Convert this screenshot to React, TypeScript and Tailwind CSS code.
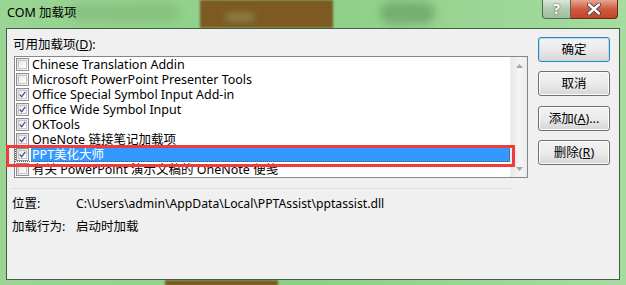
import React from 'react';

const FONT = '"Noto Sans", "Noto Sans CJK SC", sans-serif';

type Item = { label: string; checked: boolean; selected?: boolean };

const ITEMS: Item[] = [
  { label: 'Chinese Translation Addin', checked: false },
  { label: 'Microsoft PowerPoint Presenter Tools', checked: false },
  { label: 'Office Special Symbol Input Add-in', checked: true },
  { label: 'Office Wide Symbol Input', checked: true },
  { label: 'OKTools', checked: true },
  { label: 'OneNote 链接笔记加载项', checked: true },
  { label: 'PPT美化大师', checked: true, selected: true },
  { label: '有关 PowerPoint 演示文稿的 OneNote 便笺', checked: false },
];

const CheckBox: React.FC<{ checked: boolean }> = ({ checked }) => (
  <div className="w-[13px] h-[13px] shrink-0 border border-[#8f8f8f] bg-gradient-to-br from-[#dcdcdc] to-[#fbfbfb] p-[1px]">
    <div className="w-full h-full border border-[#c6c6c6] bg-gradient-to-br from-[#e9e9e9] to-white flex items-center justify-center">
      {checked && (
        <svg width="9" height="9" viewBox="0 0 9 9">
          <path d="M1 4.5 L3.5 7.5 L8 1" fill="none" stroke="#3b4f8a" strokeWidth="1.6" />
        </svg>
      )}
    </div>
  </div>
);

const Btn: React.FC<{ children: React.ReactNode; primary?: boolean }> = ({ children, primary }) => (
  <div
    className={
      'w-[72px] h-[25px] rounded-[3px] border flex items-center justify-center text-[12.5px] leading-[16px] text-black bg-gradient-to-b from-[#f2f2f2] via-[#ebebeb] to-[#d6d6d6] ' +
      (primary ? 'border-[#3c7fb1] shadow-[inset_0_0_0_1px_#a8e3fa]' : 'border-[#707070] shadow-[inset_0_0_0_1px_#fcfcfc]')
    }
  >
    {children}
  </div>
);

const ScrollArrow: React.FC<{ up?: boolean }> = ({ up }) => (
  <div className="h-[17px] flex items-center justify-center">
    <svg width="7" height="4" viewBox="0 0 7 4">
      <path d={up ? 'M0 4 L3.5 0 L7 4 Z' : 'M0 0 L3.5 4 L7 0 Z'} fill="#a6a6a6" />
    </svg>
  </div>
);

export default function App() {
  return (
    <div
      className="relative w-[626px] h-[285px] overflow-hidden bg-gradient-to-r from-[#9ad593] via-[#8ccf86] to-[#a6dc9f]"
      style={{ fontFamily: FONT }}
    >
      {/* blurred desktop behind the glass */}
      <div className="absolute left-[200px] top-0 w-[133px] h-[28px] bg-[#7c5a22] blur-[1px]" />
      <div className="absolute left-[165px] top-[280px] w-[113px] h-[6px] bg-[#7c5a22] blur-[1px]" />
      <div className="absolute left-[225px] top-[12px] w-[30px] h-[10px] rounded-full bg-[#a0b070]/40 blur-[3px]" />
      <div className="absolute left-[380px] top-[2px] w-[55px] h-[22px] rounded-full bg-[#6a9e64]/70 blur-[4px]" />
      <div className="absolute left-[70px] top-[4px] w-[110px] h-[18px] rounded-full bg-[#7fb877]/60 blur-[5px]" />

      <div className="relative flex flex-col h-full">
        {/* title bar */}
        <div className="h-[28px] flex items-start justify-between pl-[7px] pr-[8px]">
          <div className="h-[27px] flex items-center text-[12.5px] text-black">COM 加载项</div>
          <div className="flex">
            <div className="w-[29px] h-[19px] rounded-bl-[4px] border border-[#4e6b55] border-t-0 bg-gradient-to-b from-[#dbe7d9] via-[#b4cbb0] to-[#9fc09a] flex items-center justify-center text-white text-[14px] font-bold leading-none [text-shadow:0_0_2px_#333]">
              ?
            </div>
            <div className="w-[47px] h-[19px] rounded-br-[4px] border border-l-0 border-t-0 border-[#5b3023] bg-gradient-to-b from-[#e8a493] via-[#cf5a3d] to-[#c2452a] flex items-center justify-center">
              <svg width="16" height="12" viewBox="0 0 16 12">
                <path d="M3 1.5 L13 10.5 M13 1.5 L3 10.5" stroke="#3a3a3a" strokeWidth="4" strokeLinecap="round" />
                <path d="M3 1.5 L13 10.5 M13 1.5 L3 10.5" stroke="white" strokeWidth="2.4" strokeLinecap="round" />
              </svg>
            </div>
          </div>
        </div>

        {/* client area */}
        <div className="mx-[6px] h-[252px] border border-[#3f5f44] bg-[#f0f0f0] flex flex-col text-[12.5px] leading-[15px] text-black">
          <div className="flex">
            <div className="flex flex-col pl-[6px] pt-[8px]">
              <div className="h-[16px] leading-[16px]">
                可用加载项(<span className="underline">D</span>):
              </div>
              <div className="mt-[3px] ml-[1px] w-[514px] h-[122px] border border-[#828790] bg-white flex">
                <div className="flex-1 flex flex-col overflow-hidden">
                  {ITEMS.map((it) => (
                    <div
                      key={it.label}
                      className={
                        'h-[15px] shrink-0 flex items-center pl-[1px] ' +
                        (it.selected ? 'outline outline-1 outline-dotted outline-[#555] -outline-offset-1' : '')
                      }
                    >
                      <CheckBox checked={it.checked} />
                      <div
                        className={
                          'ml-[2px] h-[15px] leading-[15px] flex-1 flex items-center pl-[1px] whitespace-nowrap overflow-hidden ' +
                          (it.selected ? 'bg-[#3399ff] text-white' : '')
                        }
                      >
                        {it.label}
                      </div>
                    </div>
                  ))}
                </div>
                <div className="w-[17px] flex flex-col justify-between bg-gradient-to-r from-[#e8e8e8] via-[#f4f4f4] to-[#ececec] border-l border-[#ededed]">
                  <ScrollArrow up />
                  <ScrollArrow />
                </div>
              </div>
            </div>
            <div className="ml-[10px] pt-[8px] flex flex-col gap-[9px]">
              <Btn primary>确定</Btn>
              <Btn>取消</Btn>
              <div className="mt-[1px]">
                <Btn>
                  添加(<span className="underline">A</span>)...
                </Btn>
              </div>
              <Btn>
                删除(<span className="underline">R</span>)
              </Btn>
            </div>
          </div>

          <div className="ml-[5px] mt-[10px] w-[500px] h-px bg-[#d5dfe5]" />

          <div className="pl-[5px] mt-[6px] flex flex-col gap-[7px]">
            <div className="flex h-[16px] items-center">
              <div className="w-[64px]">位置:</div>
              <div className="text-[12.2px]">C:\Users\admin\AppData\Local\PPTAssist\pptassist.dll</div>
            </div>
            <div className="flex h-[16px] items-center">
              <div className="w-[64px]">加载行为:</div>
              <div>启动时加载</div>
            </div>
          </div>
        </div>
      </div>

      {/* red highlight annotation */}
      <div className="absolute left-[6px] top-[145px] w-[509px] h-[22px] border-[3px] border-[#ef3b3b]" />
    </div>
  );
}
